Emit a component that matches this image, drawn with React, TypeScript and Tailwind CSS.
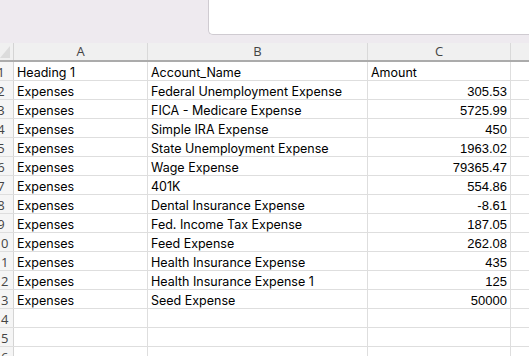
import React from "react";

const rows: [string, string, string][] = [
  ["Heading 1", "Account_Name", "Amount"],
  ["Expenses", "Federal Unemployment Expense", "305.53"],
  ["Expenses", "FICA - Medicare Expense", "5725.99"],
  ["Expenses", "Simple IRA Expense", "450"],
  ["Expenses", "State Unemployment Expense", "1963.02"],
  ["Expenses", "Wage Expense", "79365.47"],
  ["Expenses", "401K", "554.86"],
  ["Expenses", "Dental Insurance Expense", "-8.61"],
  ["Expenses", "Fed. Income Tax Expense", "187.05"],
  ["Expenses", "Feed Expense", "262.08"],
  ["Expenses", "Health Insurance Expense", "435"],
  ["Expenses", "Health Insurance Expense 1", "125"],
  ["Expenses", "Seed Expense", "50000"],
  ["", "", ""],
  ["", "", ""],
  ["", "", ""],
];

const textFont = { fontFamily: "Inter, 'Noto Sans', sans-serif" };

export default function App() {
  return (
    <div className="w-[529px] h-[356px] overflow-hidden bg-white flex flex-col">
      <div className="h-[43px] shrink-0 bg-[#eeeaef] flex">
        <div className="w-[208px] shrink-0" />
        <div className="flex-1 h-[35px] bg-white border-l border-b border-[#cfcbd1] rounded-bl-[5px]" />
      </div>
      <div
        className="grid grid-cols-[14px_134px_220px_143px_1fr] h-[19px] shrink-0 bg-[#f0f0f0] border-b-2 border-[#ababab] text-[13px] text-[#444]"
        style={{ fontFamily: "'Open Sans', 'Noto Sans', sans-serif" }}
      >
        <div className="border-r border-[#d4d4d4] relative overflow-hidden">
          <svg className="absolute left-0 top-[3px]" width="10" height="12" viewBox="0 0 10 12">
            <polygon points="10,0 10,12 0,12" fill="#dcdcdc" />
          </svg>
        </div>
        <div className="border-r border-[#d9d9d9] flex items-center justify-center leading-none">A</div>
        <div className="border-r border-[#d9d9d9] flex items-center justify-center leading-none">B</div>
        <div className="border-r border-[#d9d9d9] flex items-center justify-center leading-none">C</div>
        <div />
      </div>
      {rows.map((r, i) => (
        <div
          key={i}
          className="grid grid-cols-[14px_134px_220px_143px_1fr] h-[19px] shrink-0 border-b border-[#dedede] text-black"
        >
          <div className="border-r border-[#d4d4d4] bg-[#f5f5f5] overflow-hidden flex items-end pb-[1px]">
            <div className="w-[26px] shrink-0 ml-[-12px] text-center text-[#444] text-[13px] leading-none" style={{ fontFamily: "'Open Sans', sans-serif" }}>
              {i + 1}
            </div>
          </div>
          <div className="border-r border-[#dedede] pl-[3px] flex items-end pb-[1px] leading-none whitespace-nowrap text-[12.5px]" style={textFont}>
            {r[0]}
          </div>
          <div className="border-r border-[#dedede] pl-[3px] flex items-end pb-[1px] leading-none whitespace-nowrap text-[12.5px]" style={textFont}>
            {r[1]}
          </div>
          {i === 0 ? (
            <div className="border-r border-[#dedede] px-[3px] flex items-end pb-[1px] leading-none whitespace-nowrap text-[12.5px]" style={textFont}>
              {r[2]}
            </div>
          ) : (
            <div
              className="border-r border-[#dedede] px-[3px] flex items-end justify-end pb-[1px] leading-none whitespace-nowrap text-[13px]"
              style={{ fontFamily: "'Liberation Sans', Arial, sans-serif" }}
            >
              {r[2]}
            </div>
          )}
          <div />
        </div>
      ))}
    </div>
  );
}
